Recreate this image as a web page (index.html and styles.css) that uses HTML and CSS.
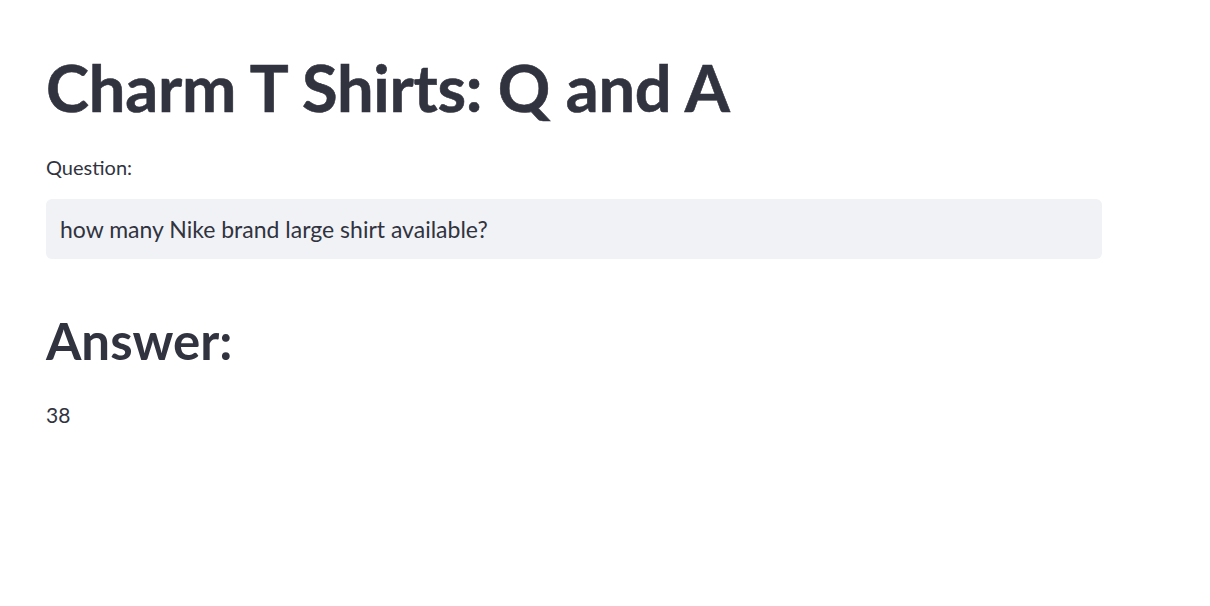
FILE: index.html
```html
<!DOCTYPE html>
<html lang="en">
<head>
<meta charset="utf-8">
<title>Charm T Shirts: Q and A</title>
<link rel="stylesheet" href="styles.css">
</head>
<body>
<main class="app">
  <h1 class="title">Charm T Shirts: Q and A</h1>
  <label class="field-label" for="q">Question:</label>
  <div class="input-wrap">
    <input id="q" class="text-input" type="text" value="how many Nike brand large shirt available?">
  </div>
  <h2 class="answer-heading">Answer:</h2>
  <p class="answer-text">38</p>
</main>
</body>
</html>
```
FILE: styles.css
```css
html, body {
  margin: 0;
  padding: 0;
  background: #ffffff;
}
body {
  font-family: Lato, "Noto Sans", sans-serif;
  color: #31333f;
}
.app {
  display: flex;
  flex-direction: column;
  align-items: flex-start;
  padding: 48px 0 0 46px;
  width: 1056px;
}
.title {
  margin: 0;
  font-size: 65px;
  font-weight: 700;
  line-height: 1.2;
  letter-spacing: -0.25px;
  -webkit-text-stroke: 0.6px #31333f;
}
.field-label {
  margin-top: 29px;
  font-size: 20px;
  line-height: 1.2;
}
.input-wrap {
  margin-top: 20px;
  width: 100%;
  height: 60px;
  background: #f0f2f6;
  border-radius: 6px;
  display: flex;
  align-items: center;
}
.text-input {
  flex: 1;
  border: none;
  background: transparent;
  outline: none;
  font-family: inherit;
  font-size: 23px;
  color: #31333f;
  padding: 0 14px;
}
.answer-heading {
  margin: 51px 0 0;
  font-size: 51px;
  font-weight: 700;
  line-height: 1.2;
}
.answer-text {
  margin: 31px 0 0;
  font-size: 21px;
  line-height: 1.2;
}
```
